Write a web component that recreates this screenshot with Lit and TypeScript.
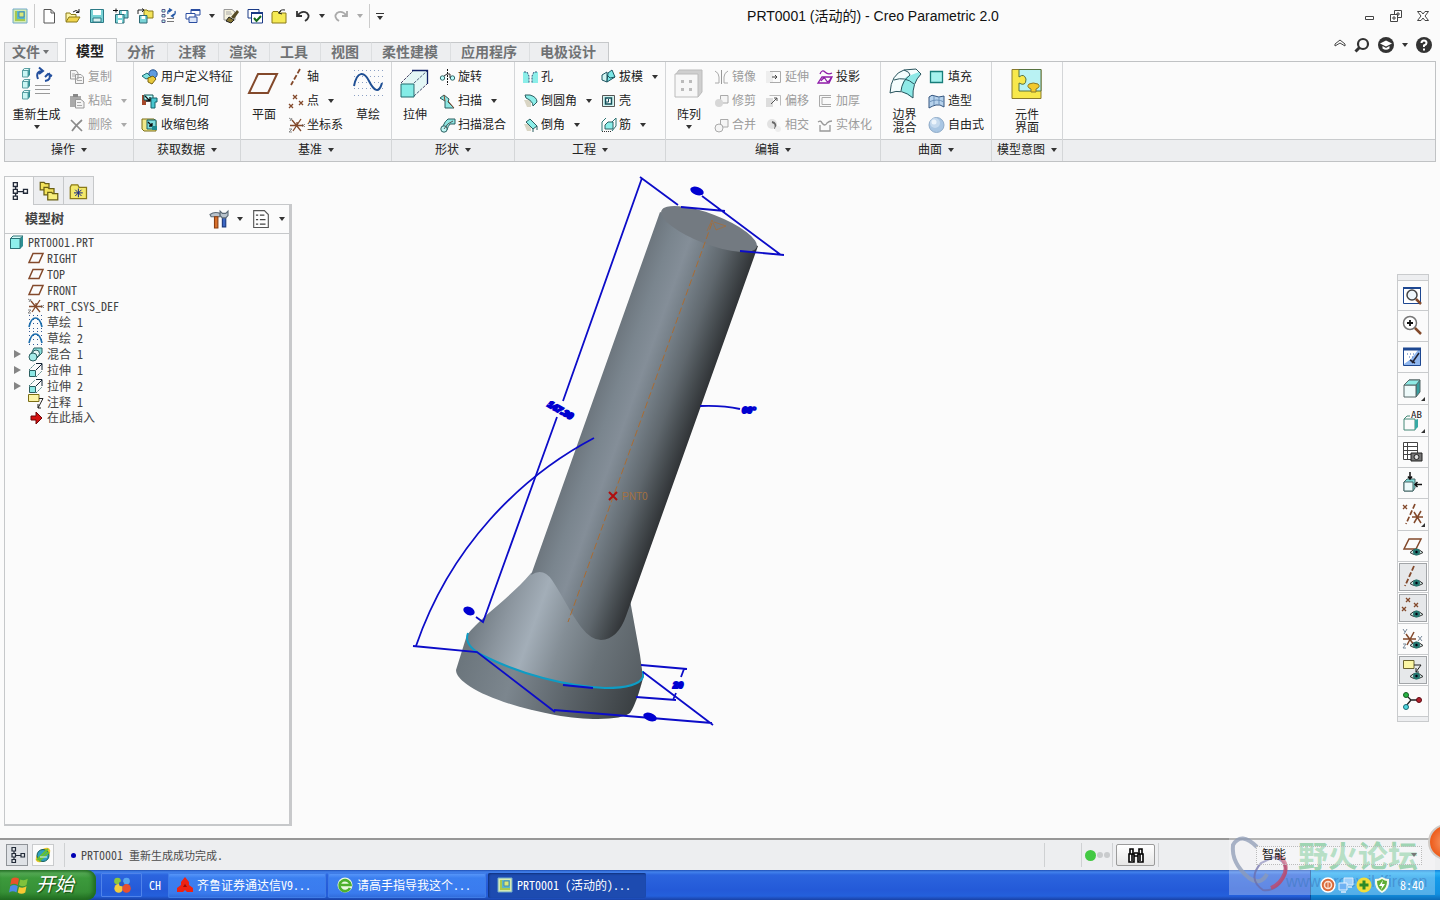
import { LitElement, html, css, svg, nothing, TemplateResult } from "lit";
import { customElement, state } from "lit/decorators.js";
import { classMap } from "lit/directives/class-map.js";

const BR = "#83492b";
const plane = svg`<path d="M5 3.500H15L11 12.500H1Z" fill="none" stroke="${BR}" stroke-width="1.500"/>`;
const eye = svg`<path d="M8 17.500Q14 11 21 17.500Q14 22 8 17.500Z" fill="#cfe4e0" stroke="#333"/><circle cx="14.500" cy="17" r="3.500" fill="#24766f"/><circle cx="14.500" cy="17" r="1.200" fill="#001"/>`;
const cross = (x: number, y: number, r = 2, c = BR) =>
  svg`<path d="M${x - r} ${y - r}l${2 * r} ${2 * r}m0 ${-2 * r}l${-2 * r} ${2 * r}" fill="none" stroke="${c}" stroke-width="1.300"/>`;
const sketchDots = svg`<path d="M1 1.500H16M1 5.500H16M1 9.500H16M1 14.500H16" stroke="#345a94" stroke-dasharray="1 3"/>`;
const csys = svg`<path d="M8 9V5M3 3L12 14M12 2L4 14M1 8.500H15" stroke="${BR}" stroke-width="1.300" fill="none"/><path d="M0 1l3 2m0-2l-2 3M0 12h3l-3 3h3M13 7l3 3m0-3l-3 3" stroke="#888" fill="none"/>`;
const winLogo = svg`<path d="M1 1H15V15H1Z" fill="#d6ecb0" stroke="#73aacd"/><path d="M3 3H13V13H3Z" fill="#a7c84e"/><path d="M5 3H13V11H5Z" fill="#59b7cd"/><path d="M7 4H12V9H7Z" fill="#d9e87a" stroke="#4c8ba8"/>`;
const treeGlyph = svg`<path d="M3 .5H6.500V4H3ZM3 6.500H6.500V10H3ZM3 12.500H6.500V15.500H3ZM12 6.500H15.500V10H12ZM5 4V6.500M5 10V12.500M7 8.500H12" fill="none" stroke="#222a38" stroke-width="1.200"/>`;
const folder = svg`<path d="M1 5V14H14V5H8L7 3H2Z" fill="#f3e96a" stroke="#8a7a18"/>`;

const ICONS: Record<string, TemplateResult> = {
  logo: winLogo,
  file: svg`<path d="M3 1.500H10L13.500 5V15H3Z" fill="#fff" stroke="#555"/><path d="M10 1.500V5H13.500" fill="none" stroke="#555"/>`,
  open: svg`<path d="M1 13.500V5H5L6 6.500H11V9" fill="#fdf5a8" stroke="#8a7a18"/><path d="M1 14L4 9H15L12 14Z" fill="#f0d44c" stroke="#8a7a18"/><path d="M8 4Q11 1 14 4M14 1V4.500H11" fill="none" stroke="#222"/>`,
  save: svg`<path d="M1.500 1.500H14.500V14.500H1.500Z" fill="#79d3d6" stroke="#2c7a86"/><path d="M4 2H12V7H4Z" fill="#fff"/><path d="M4 10H12V14H4Z" fill="#d9f0f0" stroke="#2c7a86"/>`,
  saveas: svg`<path d="M6.500 2.500H15V10H6.500Z" fill="#79d3d6" stroke="#2c6a76"/><path d="M2.500 6.500H11V15H2.500Z" fill="#79d3d6" stroke="#2c6a76"/><path d="M5 7H9V10H5ZM5 12H9V15H5ZM9 3H13V6H9Z" fill="#fff"/><path d="M0 2.500H5M3 .5V4.500" stroke="#111"/>`,
  copyfold: svg`<path d="M7 4V10H16V3H11L10 2H7Z" fill="#f3e35a" stroke="#8a7a18"/><path d="M2.500 7.500H10V15H2.500Z" fill="#79d3d6" stroke="#2c6a76"/><path d="M4.500 8H8V11H4.500Z" fill="#fff"/><path d="M1 6V2H7M5 .5L7 2L5 4" fill="none" stroke="#222"/>`,
  regen: svg`<path d="M1 1.500H4V4H1ZM1 6.500H4V9H1ZM1 12H4V14.500H1Z" fill="#bfe" stroke="#558"/><path d="M7 6Q6 2 10 2M8 .5L10.500 2L8 4M14 3Q15 7 11 8M13 6L10.500 8L13 9.500" fill="none" stroke="#2357a6" stroke-width="1.300"/><path d="M6 10.500H13M6 13.500H13" stroke="#777"/>`,
  windows: svg`<path d="M6 1.500H15V7H6Z" fill="#fff" stroke="#2a4da0"/><path d="M6 2H15" stroke="#2a4da0" stroke-width="2"/><path d="M1 5.500H10V11H1Z" fill="#fff" stroke="#2a4da0"/><path d="M4 9H12V14.500H4Z" fill="#dce6f8" stroke="#2a4da0"/>`,
  wipe: svg`<path d="M1 1.500H9L12 4V12H1Z" fill="#f4f1dd" stroke="#999"/><path d="M3 4H8M3 6H9" stroke="#aaa"/><path d="M8 9L14 2L16 4L11 11Z" fill="#554a24"/><path d="M6 9L11 12L8 15L3 13Z" fill="#877733" stroke="#222"/>`,
  check: svg`<path d="M1 1.500H12V10H1Z" fill="#fff" stroke="#1a3a86"/><path d="M4.500 5H15.500V15H4.500Z" fill="#fff" stroke="#1a3a86"/><path d="M4 5H16" stroke="#1a3a86" stroke-width="2"/><path d="M7 10L9.500 13L14 8" fill="none" stroke="#14691c" stroke-width="2"/>`,
  closefold: svg`<path d="M1 5V15H15V5H8L7 3.500H2Z" fill="#f5ea55" stroke="#8a7a18"/><path d="M8 5Q9 1 14 2M10 3L7.500 5L11 6" fill="none" stroke="#222"/>`,
  undo: svg`<path d="M2 3V8H7M2.500 7.500Q7 2 12 5Q16 9 10 13" fill="none" stroke="#333" stroke-width="1.800"/>`,
  redo: svg`<path d="M14 3V8H9M13.500 7.500Q9 2 4 5Q0 9 6 13" fill="none" stroke="#aaa" stroke-width="1.800"/>`,
  copy: svg`<path d="M.5 1.500H6L8 4V10H.5ZM5.500 5.500H11L13.500 8V14.500H5.500Z" fill="#f4f4f4" stroke="#9b9b9b"/><path d="M2 5H5M2 7H5M7 8.500H12M7 11.500H12" stroke="#aaa"/>`,
  paste: svg`<path d="M0 3H11V14H0Z" fill="#aaa"/><path d="M3 1H8V4H3Z" fill="#888"/><path d="M5.500 6.500H11L14 9V15H5.500Z" fill="#f4f4f4" stroke="#999"/><path d="M7 9.500H11M7 12.500H12" stroke="#aaa"/>`,
  del: svg`<path d="M1 3L12 14M12 3Q6 8 2 14" fill="none" stroke="#8b8b8b" stroke-width="1.700"/>`,
  udf: svg`<circle cx="10" cy="5" r="4.200" fill="#5e9be0" stroke="#24508c"/><path d="M-1 7L4 4L8 8L3 10Z" fill="#7fe0e0" stroke="#1c6c74"/><path d="M5 9L10 7L13 10L9 15L5 13Z" fill="#e8c93c" stroke="#7a6410"/>`,
  copygeo: svg`<path d="M-1 2H3V12H-1Z" fill="#a5482a"/><path d="M1 2H10V7H1Z" fill="#bff" stroke="#155"/><path d="M8 5H14V9H12V15H8Z" fill="#48c6cf" stroke="#15626a"/><path d="M2 3L7 8M7 4V8H3" stroke="#111" fill="none" stroke-width="1.300"/>`,
  shrink: svg`<path d="M-1 2H11L13 4V14H1L-1 12Z" fill="#f0e88a" stroke="#7a6d14"/><path d="M4 3H13V12H4Z" fill="#7fdcdc" stroke="#176069"/><path d="M5 5L9 9M9 6V9H6" stroke="#111" fill="none" stroke-width="1.300"/><path d="M9 9H14V13H9Z" fill="#1f8a91"/>`,
  axis: svg`<path d="M11 0L2 16" stroke="${BR}" stroke-width="1.800" stroke-dasharray="5 2"/>`,
  point: svg`${cross(6, 4, 2)}${cross(2, 13, 2)}${cross(12, 10, 2)}`,
  csys,
  plane,
  revolve: svg`<path d="M7.500 0V16" stroke="#111" stroke-dasharray="2 1"/><circle cx="2.500" cy="9" r="2.200" fill="#bff" stroke="#366"/><circle cx="12.500" cy="9" r="2.200" fill="#bff" stroke="#366"/><path d="M4 7Q7 4 10 5V9" fill="none" stroke="#333"/>`,
  sweep: svg`<path d="M0 5L4 2L9 6L8 9L14 15H5V8Z" fill="#8ee6e2" stroke="#2b5e60"/><path d="M4 2L5 8M8 8L14 15" stroke="#83492b"/>`,
  swblend: svg`<path d="M3 9Q5 4 8 2H15V7H10Q8 9 7 13Z" fill="#8ee6e2" stroke="#2b5e60"/><circle cx="4" cy="12" r="3.200" fill="#bff7f4" stroke="#2b5e60"/><path d="M4 12Q7 6 13 4" fill="none" stroke="#555"/>`,
  hole: svg`<path d="M0 3H4L6 7V14H0ZM15 3H11L9 7V14H15Z" fill="#8beee9"/><path d="M1 3H4L6 7V14M14 3H11L9 7V14" fill="none" stroke="#357" stroke-dasharray="2 1"/>`,
  round: svg`<path d="M1 7H8V14H4Z" fill="#d9d5c4"/><path d="M2 2H7Q14 4 14 9L10 13Q10 8 3 5Z" fill="#8beee9" stroke="#2b5e60"/>`,
  chamfer: svg`<path d="M1 7H8V14H4Z" fill="#d9d5c4"/><path d="M3 5L7 2L14 9L10 12Z" fill="#8beee9" stroke="#2b5e60"/><path d="M10 12V15M14 9V13" stroke="#2b5e60"/>`,
  draft: svg`<path d="M1 6L6 3V13L1 11Z" fill="#d3f5f2" stroke="#1c5560"/><path d="M6 13L14 8L11 1L7 4Z" fill="#7be6e6" stroke="#1c5560"/><path d="M6 6L9 9L14 8" fill="none" stroke="#1c5560"/>`,
  shell: svg`<path d="M1.500 2.500H13.500V13.500H1.500Z" fill="#d3f5f2" stroke="#555"/><path d="M4.500 5H10.500V11H4.500Z" fill="#fff" stroke="#14505a" stroke-width="1.500"/><path d="M7.500 6V9H5" fill="none" stroke="#14505a"/>`,
  rib: svg`<path d="M1 14V5L5 1M11 14L15 9V1L11 5" fill="none" stroke="#2b7272"/><path d="M4 8L7 5H12V12H4Z" fill="#8beee9" stroke="#2b5e60"/><path d="M1 14.500H11" stroke="#333" stroke-dasharray="1 1"/>`,
  mirror: svg`<path d="M7.500 1V15" stroke="#999"/><path d="M1 2Q5 4 5 8V14M14 2Q10 4 10 8V14H14M1 14H5" fill="none" stroke="#aaa"/>`,
  trim: svg`<path d="M6.500 2.500H14V10H6.500Z" fill="#f5f5f5" stroke="#aaa"/><circle cx="5" cy="10" r="4" fill="#d7d7d7"/>`,
  merge: svg`<path d="M6.500 2.500H14V10H6.500Z" fill="#f5f5f5" stroke="#aaa"/><circle cx="5" cy="11" r="4" fill="#f5f5f5" stroke="#aaa"/>`,
  extend: svg`<path d="M-1 2H6V14H-1Z" fill="#eee"/><path d="M3 2.500H13.500V13.500H3" fill="none" stroke="#aaa"/><path d="M5 8H10M8 6L10 8L8 10" fill="none" stroke="#444"/>`,
  offset: svg`<path d="M-1 5H6V14H-1Z" fill="#ddd"/><path d="M2.500 2.500H13.500V12.500" fill="none" stroke="#bbb"/><path d="M4 11L10 5M7 5H10V8" stroke="#555" fill="none"/>`,
  intersect: svg`<circle cx="5" cy="7" r="5" fill="#e2e2e2"/><path d="M5 5Q10 6 8 12" fill="none" stroke="#666" stroke-width="1.800"/><circle cx="11" cy="12" r="3" fill="#eee"/>`,
  project: svg`<path d="M2 5Q4 0 7 3T14 4M0 14L4 8H14L11 14ZM3 12Q6 7 8 11T13 9" fill="none" stroke="#8e1aa8" stroke-width="1.300"/>`,
  thicken: svg`<path d="M13 2.500H1.500V13.500H13M13 4.500H4V11.500H13" fill="#fafafa" stroke="#aaa"/>`,
  solidify: svg`<path d="M0 5Q3 3 4 6Q7 10 9 6Q11 4 14 4M2 8V14H12V8" fill="none" stroke="#999" stroke-width="1.300"/>`,
  fill: svg`<path d="M.5 2.500H12.500V13.500H.5Z" fill="#a5f2ee" stroke="#177d7a" stroke-width="1.300"/>`,
  style: svg`<path d="M-1 4Q2 1 5 3T14 3V14Q10 11 6 12T-1 15Z" fill="#b6d2ec" stroke="#34557f"/><path d="M4 3V12M9 3V12M-1 9Q7 5 14 9" fill="none" stroke="#6e93bb"/>`,
  freestyle: svg`<circle cx="6.500" cy="8" r="7.500" fill="#a9c6e3" stroke="#8fabc8"/><circle cx="5" cy="6" r="5" fill="#c6daee"/><circle cx="4" cy="5" r="2.500" fill="#edf4fb"/>`,
  tree: treeGlyph,
  folders: svg`<path d="M1 1H4L5 2H8V7H1Z" fill="#f3e35a" stroke="#6b6014"/><path d="M4 5H7L8 6H12V11H4Z" fill="#f3e35a" stroke="#6b6014"/><path d="M7 9H10L11 10H15V15H7Z" fill="#f8ef7c" stroke="#6b6014"/>`,
  favor: svg`${folder}<path d="M7.500 6V13M4 9.500H11M5 7L10 12M10 7L5 12" stroke="#1a2a86" stroke-width=".8"/>`,
  hammer: svg`<path d="M0 4Q4 1 9 3V6H1Z" fill="#b9c3cc" stroke="#5c6a76"/><path d="M4 6H7V16H4Z" fill="#d9702b" stroke="#8a3e12"/><path d="M11 6H14V15H11Z" fill="#3b67c4" stroke="#1c3a80"/><path d="M9 1L11 3H14L16 1V5L14 7H11L9 5Z" fill="#b9c3cc" stroke="#5c6a76"/>`,
  list: svg`<path d="M1.500 .5H11L14.500 4V15.500H1.500Z" fill="#fff" stroke="#555"/><path d="M3.500 4.500H5.500M7 4.500H11M3.500 8.500H5.500M7 8.500H12M3.500 12.500H5.500M7 12.500H12" stroke="#444"/>`,
  part: svg`<path d="M1 5L4 2H14V12L11 15H1Z" fill="#2c8f94"/><path d="M1.500 4.500H11V14.500H1.500Z" fill="#8ef0ec" stroke="#2c7377"/><path d="M1.500 4.500L4 2H14L11 4.500Z" fill="#d5fbf9" stroke="#2c7377"/>`,
  sketch: svg`${sketchDots}<path d="M1 13Q3 4 7.500 4T14 13" fill="none" stroke="#1b6dad" stroke-width="1.600"/>`,
  blend: svg`<path d="M6 2H14V7L9 12L3 8Z" fill="#8de0de" stroke="#2b5e60"/><circle cx="8" cy="7.500" r="3.500" fill="#e4f6f5" stroke="#2b5e60"/><circle cx="5" cy="11" r="4" fill="#a4ebe8" stroke="#2b5e60"/>`,
  extrude: svg`<path d="M1 8L7 2M8 15L14 9" stroke="#477" stroke-dasharray="2 1"/><path d="M1.500 8.500H7.500V14.500H1.500Z" fill="#8de8e5" stroke="#2b5e60"/><path d="M8 1.500H14V8M8 8L14 2" fill="none" stroke="#123"/>`,
  note: svg`<path d="M.5 .5H11V7.500H.5Z" fill="#fbf4a6" stroke="#7a6d14"/><path d="M11 4.500H15L10 14M10 10V14H13" fill="none" stroke="#222"/>`,
  insert: svg`<path d="M3 6H8V2L14 8L8 14V10H3Z" fill="#d41111" stroke="#6d0707"/>`,
  ie: svg`<ellipse cx="8" cy="8" rx="9" ry="5" transform="rotate(-45 8 8)" fill="#f0c22c"/><circle cx="8" cy="8.500" r="6" fill="#2f9fc2" stroke="#14605a"/><path d="M2 13L13 2M4 14L14 5" stroke="#67c12f" stroke-width="2"/><path d="M5 10H12" stroke="#e3f2f6"/>`,
  binoc: svg`<path d="M1 7H6V15H1ZM10 7H15V15H10Z" fill="#fff" stroke="#000" stroke-width="1.600"/><path d="M2 7V2H5V7M11 7V2H14V7M6 6H10M6 9H10M4 7V14M12 7V14" fill="none" stroke="#000" stroke-width="1.600"/>`,
  xp: svg`<path d="M2 3Q5 1 8 3L7 8Q4 6 1 8Z" fill="#e8532a"/><path d="M9 3.500Q12 5 15 3L14 8Q11 10 8 8Z" fill="#7fc23c"/><path d="M1 9Q4 7 7 9L6 14Q3 12 0 14Z" fill="#4f8ae8"/><path d="M8 9.500Q11 11 14 9L13 14Q10 16 7 14Z" fill="#f7c933"/>`,
  petals: svg`<circle cx="4" cy="4.500" r="3" fill="#8bc63f"/><circle cx="12" cy="4.500" r="3" fill="#58a6ee"/><circle cx="5" cy="11" r="3.800" fill="#f3cc3c"/><circle cx="12" cy="11" r="3.800" fill="#e8502e"/><circle cx="7.500" cy="7" r="2.200" fill="#2a5bc4"/>`,
  tdx: svg`<path d="M8 0L12 5V8L16 11V15H10L8 13L6 15H0V11L4 8V5Z" fill="#ee2211"/><path d="M8 7L10 10H6Z" fill="#9b0d05"/>`,
  browser: svg`<circle cx="8" cy="8" r="7.500" fill="#eaf8e2"/><path d="M13 11A5.500 5.500 0 1 1 13.500 8H4" fill="none" stroke="#4db02e" stroke-width="2.600"/>`,
  trayA: svg`<circle cx="8" cy="8" r="7" fill="#d96b3c" stroke="#fff" stroke-width="1.500"/><circle cx="8" cy="8" r="3.500" fill="none" stroke="#fbe3d6" stroke-width="1.500"/><path d="M8 5V11" stroke="#fbe3d6"/>`,
  trayB: svg`<path d="M6 1H15V8H6Z" fill="#9fd0fb" stroke="#dcecfc"/><path d="M1 6H9V13H1Z" fill="#6fb2f3" stroke="#e6f2fd"/><path d="M3 15H8M10 10H14" stroke="#dcecfc" stroke-width="1.500"/>`,
  trayC: svg`<circle cx="8" cy="8" r="7.500" fill="#f2dd3a"/><path d="M8 3.500V12.500M3.500 8H12.500" stroke="#2c8a28" stroke-width="3"/>`,
  trayD: svg`<path d="M8 0Q11 2 15 2Q16 12 8 16Q0 12 1 2Q5 2 8 0Z" fill="#f5faea"/><path d="M8 2Q11 4 13 4Q13 11 8 14Q3 11 3 4Q5 4 8 2Z" fill="#5fae36"/><path d="M9 3L5 9H8L7 13L11 7H8Z" fill="#fff"/>`,
};

const BIG: Record<string, TemplateResult> = {
  regen: svg`${[0, 11, 22].map((y) => svg`<path d="M1 ${y + 2.500}L3 ${y + 0.500}H9V${y + 7}L7 ${y + 9}H1Z" fill="#2f8f94"/><path d="M1.500 ${y + 2.500}H7V${y + 9}H1.500Z" fill="#c9f6f4" stroke="#5a9ea2"/><path d="M1.500 ${y + 2.500}L3.500 ${y + 0.500}H9L7 ${y + 2.500}Z" fill="#e5fbfa" stroke="#5a9ea2"/>`)}<path d="M17 11Q14 3 22 3M18 -0.500L22 3L18 6M28 5Q31 12 24 13M31 8L27 6L24 9M27 9" fill="none" stroke="#234f9d" stroke-width="2"/><path d="M14 17.500H29M14 21.500H29M14 25.500H29" stroke="#999"/>`,
  plane: svg`<path d="M10 6H29L20 25H1Z" fill="none" stroke="${BR}" stroke-width="2"/>`,
  sketch: svg`<path d="M2 2.500H31M2 8.500H31M2 14.500H31M2 20.500H31M2 27.500H31" stroke="#8ba0c4" stroke-dasharray="1 3"/><path d="M2 18C5 3 12 3 17 13S27 26 30 15" fill="none" stroke="#1f4f94" stroke-width="2"/>`,
  extrude: svg`<path d="M2 15L14 3M15 28L28 16M15 15L28 3" stroke="#446" stroke-dasharray="3 1" fill="none"/><path d="M14 3H28V15L16 28V16H3Z" fill="#8eece8" opacity=".2"/><path d="M2 16H15V29H2Z" fill="#84ece7" stroke="#226b6e"/><path d="M13 2.500H28.500V16" fill="none" stroke="#126" stroke-width="1.300"/>`,
  pattern: svg`<path d="M3 6L6 2H29V24L25 29Z" fill="#cfcfcf" stroke="#bbb"/><path d="M2 6H25V29H2Z" fill="#f7f7f7" stroke="#bbb"/><path d="M8 12H11V15H8ZM16 12H19V15H16ZM8 20H11V23H8ZM16 20H19V23H16Z" fill="#bbb"/>`,
  boundary: svg`<path d="M1 25Q2 6 15 2L27 1L32 6Q23 15 24 30Q13 20 1 25Z" fill="#f4fdfd"/><path d="M17 9L30 4L32 6Q23 15 24 30L12 23Q13 14 17 9Z" fill="#8ee9e7"/><path d="M5 12Q16 8 25 16M15 2Q21 4 21 7Q13 13 12 23M1 25Q2 6 15 2L27 1L32 6Q23 15 24 30Q13 20 1 25Z" fill="none" stroke="#28535c"/>`,
  component: svg`<path d="M1 1.500H30V30.500H1Z" fill="#f7e84b" stroke="#8a7a2a"/><path d="M8 1.500H30V23H8V15Q15 19 15 11Q13 5 8 9Z" fill="#b9f2f3" stroke="#56723f"/><path d="M20 24V21Q15 19 18 16Q22 14 27 16Q30 19 25 21V24Z" fill="#f2c92e" stroke="#8a7a2a"/>`,
};

const VIEW: Record<string, TemplateResult> = {
  refit: svg`<path d="M1.500 2.500H18.500V18.500H1.500Z" fill="#fff" stroke="#1d4791"/><path d="M1 3H19" stroke="#1d4791" stroke-width="2"/><circle cx="10" cy="10" r="5" fill="#eef6fb" stroke="#444" stroke-width="1.500"/><path d="M14 14L19 19" stroke="${BR}" stroke-width="2.500"/>`,
  zoomin: svg`<circle cx="8" cy="8" r="6.500" fill="#fff" stroke="#777" stroke-width="1.500"/><path d="M8 5V11M5 8H11" stroke="#111" stroke-width="1.800"/><path d="M13 13L19 19" stroke="${BR}" stroke-width="2.500"/>`,
  repaint: svg`<path d="M1.500 2.500H18.500V19.500H1.500Z" fill="#8fb6ee" stroke="#1d4791"/><path d="M2 4H16L9 13L2 18Z" fill="#fff"/><path d="M1 3H19" stroke="#1d4791" stroke-width="3"/><path d="M17 7L10 17M8 14L13 17" stroke="#223" stroke-width="1.500"/><path d="M5 8H13M7 11H12" stroke="#3a68b5" stroke-dasharray="1 2"/>`,
  shade: svg`<path d="M2 7L7 2H18V14L14 19V7Z" fill="#379f9f" stroke="#566"/><path d="M2 7H14V19H2Z" fill="#eefafa" stroke="#566"/><path d="M2 7L7 2H18L14 7Z" fill="#8eeae5" stroke="#566"/>`,
  saved: svg`<path d="M2 9L5 6H8M2 9H13V20H2Z" fill="none" stroke="#487"/><path d="M13 10L16 9V17L13 20Z" fill="#38aaa5"/>`,
  manager: svg`<path d="M1.500 1.500H15.500V18.500H1.500ZM1.500 5.500H16M1.500 9.500H16M1.500 13.500H12M5.500 2V18" fill="#fff" stroke="#444"/><path d="M9 12H20V20H9Z" fill="#777" stroke="#222"/><circle cx="14.500" cy="16" r="2.500" fill="#ddd" stroke="#222"/>`,
  persp: svg`<path d="M2 10L5 7H13V16L11 19H2Z" fill="#80dcd9" stroke="#466"/><path d="M2 10H11V19H2Z" fill="#ecfafa" stroke="#466"/><path d="M8 0V7M6 4.500L8 7L10 4.500M20 12.500H13M15.500 10L13 12.500L15.500 15" fill="none" stroke="#111" stroke-width="1.500"/>`,
  datums: svg`${cross(3, 3, 2)}<path d="M13 0L4 20" stroke="${BR}" stroke-width="1.700" stroke-dasharray="5 2"/><path d="M10 13H21M12 8L19 19M19 7L12 19" stroke="${BR}" stroke-width="1.500"/>`,
  planes: svg`<path d="M7 4H19L14 14H2Z" fill="none" stroke="${BR}" stroke-width="1.500"/>${eye}`,
  axes: svg`<path d="M12 0L3 20" stroke="${BR}" stroke-width="1.800" stroke-dasharray="5 2"/>${eye}`,
  points: svg`${cross(6, 3, 2)}${cross(2, 12, 2)}${cross(14, 8, 2)}${eye}`,
  csyss: svg`<path d="M1 11H14M4 6L12 17M12 4L5 17" stroke="${BR}" stroke-width="1.500"/><path d="M1 1L3 4M5 1L2 6M1 16H4L1 20H4M16 8L20 13M20 8L16 13" stroke="#789" fill="none"/>${eye}`,
  notes: svg`<path d="M1.500 1.500H12V9.500H1.500Z" fill="#fbf6a4" stroke="#6b6430"/><path d="M12 6H19L14 13M14 9V13H17" fill="none" stroke="#222"/>${eye}`,
  spin: svg`<path d="M4 5L9 10L4 16M9 10H17" fill="none" stroke="#222" stroke-width="1.300"/><circle cx="4" cy="5" r="2.500" fill="#27b544" stroke="#145c24"/><circle cx="17" cy="10" r="2.500" fill="#b3202c" stroke="#5e0c14"/><circle cx="4" cy="17" r="2.500" fill="#4fd6e0" stroke="#1a6a72"/>`,
};

interface Cmd { icon: string; text: string; off?: boolean; menu?: boolean; big?: boolean; lines?: string[]; }
type Col = Cmd | Cmd[];
interface Group { id: string; label: string; cols: Col[]; }

const c = (icon: string, text: string, menu = false): Cmd => ({ icon, text, menu });
const off = (icon: string, text: string, menu = false): Cmd => ({ icon, text, menu, off: true });
const big = (icon: string, lines: string[], menu = false): Cmd => ({ icon, text: lines.join(""), lines, menu });

const GROUPS: Group[] = [
  { id: "ops", label: "操作", cols: [big("regen", ["重新生成"], true), [off("copy", "复制"), off("paste", "粘贴", true), off("del", "删除", true)]] },
  { id: "get", label: "获取数据", cols: [[c("udf", "用户定义特征"), c("copygeo", "复制几何"), c("shrink", "收缩包络")]] },
  { id: "datum", label: "基准", cols: [big("plane", ["平面"]), [c("axis", "轴"), c("point", "点", true), c("csys", "坐标系")], big("sketch", ["草绘"])] },
  { id: "shape", label: "形状", cols: [big("extrude", ["拉伸"]), [c("revolve", "旋转"), c("sweep", "扫描", true), c("swblend", "扫描混合")]] },
  { id: "eng", label: "工程", cols: [[c("hole", "孔"), c("round", "倒圆角", true), c("chamfer", "倒角", true)], [c("draft", "拔模", true), c("shell", "壳"), c("rib", "筋", true)]] },
  { id: "edit", label: "编辑", cols: [big("pattern", ["阵列"], true), [off("mirror", "镜像"), off("trim", "修剪"), off("merge", "合并")], [off("extend", "延伸"), off("offset", "偏移"), off("intersect", "相交")], [c("project", "投影"), off("thicken", "加厚"), off("solidify", "实体化")]] },
  { id: "surf", label: "曲面", cols: [big("boundary", ["边界", "混合"]), [c("fill", "填充"), c("style", "造型"), c("freestyle", "自由式")]] },
  { id: "intent", label: "模型意图", cols: [big("component", ["元件", "界面"])] },
];

const TABS = ["模型", "分析", "注释", "渲染", "工具", "视图", "柔性建模", "应用程序", "电极设计"];

const TREE: { icon: string; text: string; open?: boolean }[] = [
  { icon: "plane", text: "RIGHT" },
  { icon: "plane", text: "TOP" },
  { icon: "plane", text: "FRONT" },
  { icon: "csys", text: "PRT_CSYS_DEF" },
  { icon: "sketch", text: "草绘 1" },
  { icon: "sketch", text: "草绘 2" },
  { icon: "blend", text: "混合 1", open: true },
  { icon: "extrude", text: "拉伸 1", open: true },
  { icon: "extrude", text: "拉伸 2", open: true },
  { icon: "note", text: "注释 1" },
  { icon: "insert", text: "在此插入" },
];

const VIEW_BAR: { icon: string; label: string; menu?: boolean; on?: boolean }[] = [
  { icon: "refit", label: "重新调整" },
  { icon: "zoomin", label: "放大" },
  { icon: "repaint", label: "重画" },
  { icon: "shade", label: "显示样式", menu: true },
  { icon: "saved", label: "已命名视图", menu: true },
  { icon: "manager", label: "视图管理器" },
  { icon: "persp", label: "透视图" },
  { icon: "datums", label: "基准显示", menu: true },
  { icon: "planes", label: "平面显示" },
  { icon: "axes", label: "轴显示", on: true },
  { icon: "points", label: "点显示", on: true },
  { icon: "csyss", label: "坐标系显示" },
  { icon: "notes", label: "注释显示", on: true },
  { icon: "spin", label: "旋转中心" },
];

const icon = (name: string) => html`<svg class="i16" viewBox="0 0 16 16" aria-hidden="true">${ICONS[name]}</svg>`;
const arrow = html`<span class="arrow"></span>`;
/* Latin runs use the half-width forms, six pixels each, next to full-width characters. */
const mixed = (text: string) =>
  text.split(/([\x20-\x7e]+)/).filter(Boolean).map((run) =>
    /^[\x20-\x7e]/.test(run) ? html`<span class="half">${run}</span>` : run);

@customElement("app-root")
export class AppRoot extends LitElement {
  @state() private tab = 0;

  static styles = css`
    :host { display: flex; flex-direction: column; height: 100vh; position: relative; overflow: hidden; background: #fbfbfb; color: #222;
      font: 12px/16px "Liberation Sans", "Noto Sans CJK SC", sans-serif; }
    * { box-sizing: border-box; }
    button { font: inherit; color: inherit; background: none; border: 0; padding: 0; margin: 0; display: flex; align-items: center; white-space: nowrap; }
    svg { display: block; flex: none; overflow: visible; }
    .i16 { width: 16px; height: 16px; }
    .i32 { width: 32px; height: 32px; }
    .i22 { width: 22px; height: 22px; }
    .arrow { flex: none; width: 0; height: 0; border: 3px solid transparent; border-top: 4px solid #333; border-bottom: 0; }
    .half { font-family: "Noto Sans CJK SC", monospace; font-size: 12px; font-feature-settings: "hwid" 1; white-space: pre; }

    .top { display: flex; align-items: center; height: 32px; padding: 0 10px 0 12px; flex: none; }
    .quick { display: flex; align-items: center; gap: 8px; }
    .vr { width: 1px; height: 24px; background: #ccc; }
    .quick .vr { margin: 0 -2px; }
    .quick .custom { border-top: 1px solid #333; padding: 2px 1px 0; }
    .title { flex: 1; text-align: center; font-size: 14px; font-weight: 400; margin: 0; color: #111; }
    .win { display: flex; gap: 13px; }
    .win svg { width: 14px; height: 14px; }

    .tabs { display: flex; align-items: flex-end; height: 29px; padding: 0 8px 0 4px; flex: none; font-size: 14px; font-weight: 700; color: #707274; }
    .tab { height: 19px; padding: 0 12px 0 10px; border-top: 1px solid #c6c8ca; border-right: 1px solid #dcdee0; background: #edeef0; }
    .tab.file { width: 54px; padding: 0 0 0 7px; margin-right: 7px; gap: 3px; border-left: 1px solid #c6c8ca; }
    .tab.file .arrow { border-top-color: #707274; }
    .tab:last-of-type { border-right-color: #c6c8ca; }
    .tab.active { height: 24px; margin-bottom: -1px; border: 1px solid #c6c8ca; border-bottom: 0; background: #fbfbfb; color: #222; position: relative; }
    .help { margin-left: auto; display: flex; align-items: center; gap: 8px; padding-bottom: 8px; }

    .ribbon { display: flex; margin: 0 4px; border: 1px solid #c0c2c4; flex: none; }
    .group { display: flex; flex-direction: column; border-right: 1px solid #d4d6d8; }
    .rest { flex: 1; display: flex; flex-direction: column; }
    .cols { display: grid; height: 78px; padding-top: 3px; border-bottom: 1px solid #c9cbcd; }
    .ops .cols { grid-template-columns: 63px 65px; }
    .get .cols { grid-template-columns: 99px; padding-left: 7px; }
    .datum .cols { grid-template-columns: 46px 58px 46px; }
    .shape .cols { grid-template-columns: 46px 76px; }
    .eng .cols { grid-template-columns: 78px 66px; padding-left: 6px; }
    .edit .cols { grid-template-columns: 46px 53px 51px 64px; }
    .surf .cols { grid-template-columns: 47px 63px; }
    .intent .cols { grid-template-columns: 70px; }
    .stack { display: flex; flex-direction: column; }
    .cmd { height: 24px; padding-left: 2px; gap: 2px; }
    .cmd .arrow { margin-left: 7px; }
    button:disabled { color: #9c9c9c; }
    button:disabled .arrow { border-top-color: #aaa; }
    .bigcmd { flex-direction: column; padding-top: 3px; line-height: 13px; }
    .bigcmd .words { display: flex; flex-direction: column; align-items: center; margin: 9px 0 3px; }
    .foot { height: 21px; padding-bottom: 2px; justify-content: center; gap: 6px; background: #edeef0; width: 100%; }

    .main { flex: 1; min-height: 0; display: flex; padding-left: 4px; padding-right: 11px; }
    .side { width: 288px; flex: none; padding: 14px 0 12px; display: flex; flex-direction: column; }
    .sidetabs { display: flex; height: 28px; }
    .sidetabs button { width: 30px; justify-content: center; border: 1px solid #c6c8ca; border-left: 0; border-bottom: 0; background: #edeef0; }
    .sidetabs button.active { background: #fbfbfb; border-left: 1px solid #c6c8ca; margin-bottom: -1px; position: relative; }
    .sidetabs svg { width: 20px; height: 20px; }
    .sidetabs .active svg { width: 18px; height: 18px; }
    .panel { flex: 1; border: 1px solid #c6c8ca; border-right: 3px solid #c8c9cb; border-bottom-width: 2px; }
    .panelhead { display: flex; align-items: center; height: 29px; padding: 0 4px 0 20px; border-bottom: 1px solid #c6c8ca; gap: 9px; }
    .panelhead h2 { flex: 1; margin: 0; font-size: 13px; font-weight: 700; color: #444; }
    .panelhead button { gap: 9px; }
    .panelhead svg { width: 18px; height: 18px; }
    ul { list-style: none; margin: 0; padding: 0; color: #444; }
    .node { display: flex; align-items: center; height: 16px; gap: 3px; }
    .root { padding-left: 4px; }
    .node .twist { width: 14px; height: 16px; margin: 0 -3px 0 9px; }
    .twist i { border: 4px solid transparent; border-left: 7px solid #858585; border-right: 0; }
    .scene { flex: 1; min-width: 0; height: 100%; }
    .dim { font: italic 700 9px "Liberation Sans", sans-serif; fill: #0000d0; stroke: #0000d0; stroke-width: 2px; }
    .pnt { font: 10px "Liberation Sans", sans-serif; fill: #a5713f; }
    .view { width: 32px; flex: none; align-self: flex-start; margin-top: 112px; border: 1px solid #c9cbcd; background: #edeef0; padding: 5px 0 4px; display: flex; flex-direction: column; }
    .view button { position: relative; height: 31px; justify-content: center; background: #fbfbfb; border-bottom: 1px solid #c9cbcd; }
    .view button.menu { height: 32px; }
    .view button:first-child { border-top: 1px solid #c9cbcd; }
    .view button.on { background: #e6e8ea; box-shadow: inset 0 0 0 1px #fff, inset 0 0 0 2px #a2a5a8; }
    .view .menu::after { content: ""; position: absolute; right: 3px; bottom: 3px; border: 2px solid #333; border-top-color: transparent; border-left-color: transparent; }
    .ab { font: 9px "DejaVu Sans Mono", monospace; fill: #111; }

    .status { display: flex; align-items: center; height: 32px; flex: none; border-top: 2px solid #979797; background: #edeef0; padding: 0 18px 0 6px; }
    .sq { width: 22px; height: 22px; justify-content: center; border: 1px solid #c9cbcd; background: #fbfbfb; margin-right: 4px; }
    .sq.on { background: #dfe2e6; border-color: #8f9398; }
    .status .vr { background: #cfd1d3; }
    .status .first { margin: 0 6px 0 6px; }
    .dot { width: 5px; height: 5px; border-radius: 50%; background: #0000b4; margin-right: 5px; }
    .msg { flex: 1; font-size: 11px; color: #4c4c4c; }
    .lamps { display: flex; align-items: center; gap: 1px; margin: 0 2px 0 3px; }
    .lamps i { width: 6px; height: 6px; border-radius: 50%; background: #c9cbcd; }
    .lamps i.go { width: 11px; height: 11px; background: #43c943; }
    .gap { width: 36px; }
    .find { width: 39px; height: 22px; justify-content: center; margin: 0 3px; border: 1px solid #9b9b9b; border-radius: 2px; background: linear-gradient(#fff, #e6e6e6); }
    .pick { position: relative; z-index: 1; margin-left: 97px; display: flex; align-items: center; }
    select { appearance: none; width: 166px; height: 19px; padding: 0 5px; border: 1px dotted #bbb; background: rgba(255, 255, 255, .25); font: inherit; font-size: 12px; color: #222; border-radius: 0; }
    .pick .arrow { position: absolute; right: 5px; border-top-color: #777; }

    .task { display: flex; align-items: center; height: 30px; flex: none; color: #fff; background: linear-gradient(#1f4fb5 0, #4282ec 2px, #2b64de 5px, #245ad8 20px, #2460dc 26px, #1941a5 30px); }
    .start { width: 96px; height: 30px; padding-left: 9px; gap: 7px; border-radius: 0 9px 9px 0; font-style: italic; font-size: 19px; text-shadow: 1px 1px 1px #124a12;
      background: linear-gradient(#2f7a30 0, #55a955 3px, #3c9a3c 8px, #369036 22px, #226d22 30px); box-shadow: inset -3px 0 4px #1f6a20; }
    .start svg { width: 20px; height: 20px; }
    .ql { width: 41px; height: 24px; justify-content: center; margin: 0 7px 0 5px; border: 1px solid #4f83ea; border-radius: 1px; }
    .ql svg { width: 18px; height: 18px; }
    .lang { margin-right: 7px; }
    .job { width: 158px; height: 25px; margin-right: 2px; padding-left: 9px; gap: 4px; border-radius: 2px; background: linear-gradient(#5d9bfb, #3b7ff0 5px, #3a7bee 20px, #2f69d8); box-shadow: inset 0 0 0 1px #3f7ce6; }
    .job.on { background: #1d4bb0; box-shadow: inset 1px 1px 2px #10317c; }
    .tray { margin-left: auto; width: 130px; height: 30px; padding-left: 9px; display: flex; align-items: center; gap: 2px; background: linear-gradient(#1682d8 0, #2ab0f5 3px, #159bea 8px, #1290e0 24px, #0d6cb8 30px); border-left: 1px solid #0c4b9c; }
    .tray > * { position: relative; z-index: 1; }
    .tray time { margin-left: 8px; }

    .mark { position: absolute; right: 5px; bottom: 5px; width: 206px; height: 58px; background: rgba(255, 255, 255, .28); pointer-events: none; }
    .mark svg { position: absolute; left: 0; top: 0; width: 62px; height: 58px; }
    .mark b { position: absolute; left: 69px; top: -2px; font: 700 30px/38px "Noto Sans CJK SC", sans-serif; color: rgba(110, 195, 140, .65); white-space: nowrap; }
    .mark span { position: absolute; left: 57px; top: 35px; font-size: 16px; line-height: 20px; color: rgba(58, 120, 190, .55); }
    .ball { position: absolute; right: -24px; bottom: 40px; width: 36px; height: 36px; border-radius: 50%; border: 2px solid #cfcac6; background: radial-gradient(#f9a070, #ee6020 65%); }
  `;

  private command(cmd: Cmd) {
    if (cmd.lines) {
      return html`<button class="bigcmd">
        <svg class="i32" viewBox="0 0 32 32" aria-hidden="true">${BIG[cmd.icon]}</svg>
        <span class="words">${cmd.lines.map((l) => html`<span>${l}</span>`)}</span>
        ${cmd.menu ? arrow : nothing}
      </button>`;
    }
    return html`<button class="cmd" ?disabled=${cmd.off}>${icon(cmd.icon)}<span>${cmd.text}</span>${cmd.menu ? arrow : nothing}</button>`;
  }

  private tool(name: string, label: string) {
    return html`<button aria-label=${label}>${icon(name)}</button>`;
  }

  private scene() {
    return html`<svg class="scene" viewBox="292 162 1105 676" preserveAspectRatio="xMinYMin meet" role="img" aria-label="PRT0001">
      <defs>
        <linearGradient id="cyl" gradientUnits="userSpaceOnUse" x1="660" y1="212" x2="758" y2="247">
          <stop offset="0" stop-color="#6d767e"/><stop offset=".18" stop-color="#7a858e"/><stop offset=".36" stop-color="#848e98"/>
          <stop offset=".52" stop-color="#737d85"/><stop offset=".7" stop-color="#5f676d"/><stop offset=".85" stop-color="#474d51"/><stop offset="1" stop-color="#303336"/>
        </linearGradient>
        <linearGradient id="cone" gradientUnits="userSpaceOnUse" x1="478" y1="612" x2="645" y2="672">
          <stop offset="0" stop-color="#727c84"/><stop offset=".16" stop-color="#8c969f"/><stop offset=".32" stop-color="#a3aeb8"/>
          <stop offset=".5" stop-color="#848e96"/><stop offset=".72" stop-color="#6a7379"/><stop offset="1" stop-color="#575e63"/>
        </linearGradient>
        <linearGradient id="disc" gradientUnits="userSpaceOnUse" x1="458" y1="660" x2="638" y2="715">
          <stop offset="0" stop-color="#6b757c"/><stop offset=".3" stop-color="#7c868e"/><stop offset=".6" stop-color="#5d656b"/><stop offset="1" stop-color="#373c3f"/>
        </linearGradient>
      </defs>
      <path fill="url(#disc)" d="M466 638L456 670C456 684 495 704 555 715C590 721 622 720 630 713C635 706 640 690 643 678L600 640Z"/>
      <path fill="url(#cone)" d="M531 573C510 598 482 616 467 635C465 645 472 650 484 656C520 674 565 686 605 688C628 688 640 684 643 677L640 655L630 600L560 560Z"/>
      <path fill="url(#cyl)" d="M660 212L531 575Q543 567 552 580C562 595 570 612 581 627Q591 640 601 640Q618 639 626 616L631 602L758 246Z"/>
      <ellipse cx="709" cy="229" rx="51" ry="15" transform="rotate(21 709 229)" fill="#737a81"/>
      <path fill="none" stroke="#0e9cc4" stroke-width="2" d="M468 633C464 643 472 650 484 656C520 674 565 686 605 688C628 688 640 684 643 677V671"/>
      <path fill="none" stroke="#a86c34" stroke-dasharray="7 3" d="M712 223L568 622"/>
      <path fill="none" stroke="#a86c34" stroke-opacity=".7" d="M707 231L712 220L716 230M714 222L726 226L716 230"/>
      <g fill="none" stroke="#0c0cc8" stroke-width="1.800">
        <path d="M642 178L563 401M557 417L483 622L476 617M640 177L678 205M681 207L725 211M702 196L781 255M740 251L784 255"/>
        <path d="M594 438C520 477 450 547 416 646M413 646L477 652L555 712M554 710L712 723M643 672L713 725"/>
        <path d="M641 665L687 669M636 697L676 700M684 669L681 677M676 693L673 700M563 685L593 688M700 406Q722 405 740 409"/>
      </g>
      <g fill="#0000d0">
        <ellipse cx="697" cy="191" rx="7" ry="4" transform="rotate(20 697 191)"/>
        <ellipse cx="469" cy="611" rx="6" ry="4" transform="rotate(25 469 611)"/>
        <ellipse cx="650" cy="717" rx="7" ry="4" transform="rotate(20 650 717)"/>
      </g>
      <text class="dim" transform="translate(547 406) rotate(30)">147.30</text>
      <text class="dim" x="742" y="413">60°</text>
      <text class="dim" x="673" y="688">20</text>
      <path d="M609 492L617 500M617 492L609 500" stroke="#b00d0d" stroke-width="2"/>
      <text class="pnt" x="622" y="500">PNT0</text>
    </svg>`;
  }

  render() {
    return html`
      <header class="top">
        <div class="quick">
          ${icon("logo")}<span class="vr"></span>
          ${this.tool("file", "新建")}${this.tool("open", "打开")}${this.tool("save", "保存")}${this.tool("saveas", "另存为")}
          ${this.tool("copyfold", "保存副本")}${this.tool("regen", "重新生成")}${this.tool("windows", "窗口")}
          <button aria-label="窗口列表">${arrow}</button>
          ${this.tool("wipe", "拭除")}${this.tool("check", "激活")}${this.tool("closefold", "关闭")}${this.tool("undo", "撤消")}
          <button aria-label="撤消列表">${arrow}</button>
          ${this.tool("redo", "重做")}
          <button aria-label="重做列表" disabled>${arrow}</button>
          <span class="vr"></span>
          <button class="custom" aria-label="自定义">${arrow}</button>
        </div>
        <h1 class="title">PRT0001 (活动的) - Creo Parametric 2.0</h1>
        <div class="win">
          <button aria-label="最小化"><svg viewBox="0 0 14 14"><path d="M3.500 7.500H11.500V10.500H3.500Z" fill="#fff" stroke="#444"/></svg></button>
          <button aria-label="还原"><svg viewBox="0 0 14 14"><path d="M5.500 1.500H12.500V8.500H5.500ZM8 4H10V6H8Z" fill="#fff" stroke="#444"/><path d="M1.500 5.500H8.500V12.500H1.500ZM4 8H6V10H4Z" fill="#fff" stroke="#444"/></svg></button>
          <button aria-label="关闭"><svg viewBox="0 0 14 14"><path d="M1.500 2.500H5L7 5L9 2.500H12.500L9 7L12.500 11.500H9L7 9L5 11.500H1.500L5 7Z" fill="#fff" stroke="#444"/></svg></button>
        </div>
      </header>

      <nav class="tabs">
        <button class="tab file">文件${arrow}</button>
        ${TABS.map((t, i) => html`<button class=${classMap({ tab: true, active: i === this.tab })} @click=${() => (this.tab = i)}>${t}</button>`)}
        <div class="help">
          <button aria-label="最小化功能区"><svg width="12" height="12" viewBox="0 0 12 12"><path d="M1 5L6 1L11 5V7L6 4L1 7Z" fill="#fff" stroke="#444"/></svg></button>
          <button aria-label="搜索"><svg class="i16" viewBox="0 0 16 16"><circle cx="9" cy="7" r="5" fill="none" stroke="#333" stroke-width="2.200"/><path d="M5.500 10.500L1.500 14.500" stroke="#333" stroke-width="3"/></svg></button>
          <button aria-label="学习"><svg class="i16" viewBox="0 0 16 16"><circle cx="8" cy="8" r="8" fill="#333"/><path d="M2 6.500L8 3.500L14 6.500L8 9.500Z" fill="#fff"/><path d="M4.500 9V11.500Q8 14 11.500 11.500V9L8 11Z" fill="#fff"/></svg></button>
          <button aria-label="学习列表">${arrow}</button>
          <button aria-label="帮助"><svg class="i16" viewBox="0 0 16 16"><circle cx="8" cy="8" r="8" fill="#333"/><path d="M5.500 6Q5.500 3.500 8 3.500T10.500 6Q10.500 7.500 8 8.500V10M8 11.500V13.500" fill="none" stroke="#fff" stroke-width="2"/></svg></button>
        </div>
      </nav>

      <section class="ribbon">
        ${GROUPS.map((g) => html`<div class="group ${g.id}">
          <div class="cols">${g.cols.map((col) => Array.isArray(col) ? html`<div class="stack">${col.map((x) => this.command(x))}</div>` : this.command(col))}</div>
          <button class="foot">${g.label}${arrow}</button>
        </div>`)}
        <div class="rest"><div class="cols"></div><div class="foot"></div></div>
      </section>

      <main class="main">
        <aside class="side">
          <div class="sidetabs">
            <button class="active" aria-label="模型树">${icon("tree")}</button>
            <button aria-label="文件夹浏览器">${icon("folders")}</button>
            <button aria-label="收藏夹">${icon("favor")}</button>
          </div>
          <div class="panel">
            <div class="panelhead">
              <h2>模型树</h2>
              <button aria-label="设置">${icon("hammer")}${arrow}</button>
              <button aria-label="显示">${icon("list")}${arrow}</button>
            </div>
            <ul>
              <li><div class="node root">${icon("part")}<span>${mixed("PRT0001.PRT")}</span></div>
                <ul>${TREE.map((n) => html`<li class="node"><button class="twist" aria-label="展开" ?disabled=${!n.open}>${n.open ? html`<i></i>` : nothing}</button>${icon(n.icon)}<span>${mixed(n.text)}</span></li>`)}</ul>
              </li>
            </ul>
          </div>
        </aside>
        ${this.scene()}
        <div class="view">
          ${VIEW_BAR.map((v) => html`<button class=${classMap({ menu: !!v.menu, on: !!v.on })} aria-label=${v.label}>
            <svg class="i22" viewBox="0 0 22 22">${VIEW[v.icon]}${v.icon === "saved" ? svg`<text class="ab" x="9" y="8">AB</text>` : nothing}</svg>
          </button>`)}
        </div>
      </main>

      <footer class="status">
        <button class="sq on" aria-label="导航器">${icon("tree")}</button>
        <button class="sq" aria-label="浏览器">${icon("ie")}</button>
        <span class="vr first"></span>
        <span class="dot"></span>
        <span class="msg">${mixed("PRT0001 ")}重新生成成功完成${mixed(".")}</span>
        <span class="vr"></span><span class="gap"></span><span class="vr"></span>
        <span class="lamps"><i class="go"></i><i></i><i></i></span>
        <span class="vr"></span>
        <button class="find" aria-label="查找">${icon("binoc")}</button>
        <span class="vr"></span>
        <div class="pick"><select aria-label="过滤器"><option>智能</option></select>${arrow}</div>
      </footer>

      <div class="task">
        <button class="start">${icon("xp")}开始</button>
        <button class="ql" aria-label="快速启动">${icon("petals")}</button>
        <span class="lang">${mixed("CH")}</span>
        <button class="job">${icon("tdx")}<span>${mixed("齐鲁证券通达信V9...")}</span></button>
        <button class="job">${icon("browser")}<span>${mixed("请高手指导我这个...")}</span></button>
        <button class="job on">${icon("logo")}<span>${mixed("PRT0001 (活动的)...")}</span></button>
        <div class="tray">${icon("trayA")}${icon("trayB")}${icon("trayC")}${icon("trayD")}<time>${mixed("8:40")}</time></div>
      </div>

      <div class="mark">
        <svg viewBox="0 0 62 58" fill="none" stroke-width="4">
          <path d="M28 10Q12-6 4 8Q2 26 20 41Q32 49 38 37" stroke="#8e9bb5" opacity=".75"/>
          <path d="M45 20Q60 25 56 38Q48 55 34 53Q18 42 32 26L45 20" stroke="#6a69a6" opacity=".7" stroke-width="2"/>
          <path d="M48 18Q59 24 56 36Q52 47 42 51" stroke="#c2476a" opacity=".8"/>
        </svg>
        <b>野火论坛</b><span>www.proewildfire.cn</span>
      </div>
      <div class="ball"></div>
    `;
  }
}
